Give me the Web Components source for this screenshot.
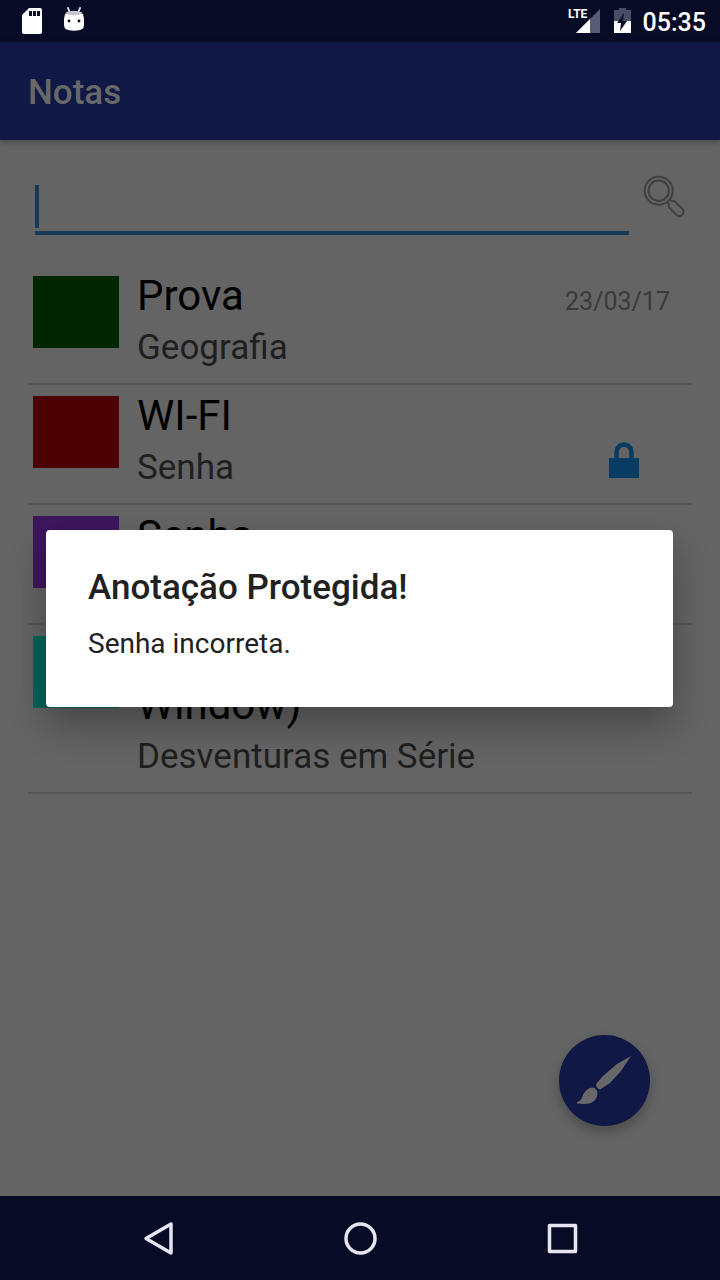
<!DOCTYPE html>
<html lang="pt-BR">
<head>
<meta charset="UTF-8">
<meta name="viewport" content="width=device-width, initial-scale=1">
<title>Notas</title>
<style>
  body {
    margin: 0;
    background: #646464;
    font-family: Roboto, "Liberation Sans", sans-serif;
  }
</style>
</head>
<body>
<notes-screen>
  <status-bar slot="status" time="05:35"></status-bar>
  <app-bar slot="bar">Notas</app-bar>
  <search-box></search-box>
  <note-list>
    <note-item color="#002600" date="23/03/17">Prova<span slot="subject">Geografia</span></note-item>
    <note-item color="#4b0003" locked>WI-FI<span slot="subject">Senha</span></note-item>
    <note-item color="#3d165c">Senha</note-item>
    <note-item color="#046358"><br>Window)<span slot="subject">Desventuras em Série</span></note-item>
  </note-list>
  <new-note-button slot="fab"></new-note-button>
  <alert-dialog slot="dialog" heading="Anotação Protegida!">Senha incorreta.</alert-dialog>
  <nav-bar slot="nav"></nav-bar>
</notes-screen>

<script>
// Base: monta o shadow root a partir do render() de cada componente
class BaseElement extends HTMLElement {
  connectedCallback() {
    if (this.shadowRoot) return;
    this.attachShadow({ mode: 'open' }).innerHTML = this.render();
  }
}

// Estrutura da tela
class NotesScreen extends BaseElement {
  render() {
    return `
      <style>
        :host {
          display: grid;
          grid-template-rows: auto auto 1fr auto;
          position: relative;
          min-height: 100vh;
        }
        main { position: relative; padding: 0 28px; }
        slot[name="fab"]::slotted(*) { position: absolute; right: 70px; bottom: 70px; }
        slot[name="dialog"]::slotted(*) { position: absolute; inset: 42px 0 85px; }
      </style>
      <slot name="status"></slot>
      <slot name="bar"></slot>
      <main><slot></slot><slot name="fab"></slot></main>
      <slot name="nav"></slot>
      <slot name="dialog"></slot>
    `;
  }
}

class StatusBar extends BaseElement {
  render() {
    return `
      <style>
        :host {
          display: flex;
          align-items: center;
          justify-content: space-between;
          height: 42px;
          padding: 0 14px 0 20px;
          background: #070b26;
          color: #fff;
        }
        div { display: flex; align-items: center; }
        .left { gap: 18px; }
        .right { gap: 11px; }
        svg { display: block; }
        time { font-size: 25px; line-height: 30px; font-weight: 500; padding-top: 4px; }
      </style>
      <div class="left">
        <svg width="24" height="42" viewBox="0 0 24 42">
          <path fill="#fff" d="M9 8h11a2 2 0 0 1 2 2v22a2 2 0 0 1-2 2H4a2 2 0 0 1-2-2V15z"/>
          <path fill="#070b26" d="M9 11h3v5H9zM13 11h3v5h-3zM17 11h3v5h-3z"/>
        </svg>
        <svg width="24" height="42" viewBox="0 0 24 42">
          <path stroke="#d9dae3" stroke-width="2" stroke-linecap="round" d="M6 8l2 5M18 8l-2 5"/>
          <path fill="#fff" d="M3 14h18l1 5v4c0 5-1 6-4 7-4 1-8 1-12 0-3-1-4-2-4-7v-4z"/>
          <path fill="#c3c4cf" d="M3 13c5-3 13-3 18 0-4 3-14 3-18 0z"/>
          <circle cx="7" cy="21" r="1.4" fill="#070b26"/><circle cx="17" cy="21" r="1.4" fill="#070b26"/>
        </svg>
      </div>
      <div class="right">
        <svg width="34" height="42" viewBox="0 0 34 42">
          <path fill="#595c72" d="M33 9v24H9z"/>
          <path fill="#fff" d="M23 19v14H9z"/>
          <text x="1" y="18" fill="#fff" font-family="Roboto, sans-serif" font-weight="700" font-size="12">LTE</text>
        </svg>
        <svg width="20" height="42" viewBox="0 0 20 42">
          <path fill="#494c63" d="M2 10h5V8h7v2h5v11H2z"/>
          <path fill="#fff" d="M2 21h17v12H2z"/>
          <path fill="#070b26" d="M12 13L5 23h4l-1 8 7-10h-4z"/>
        </svg>
        <time>${this.getAttribute('time')}</time>
      </div>
    `;
  }
}

class AppBar extends BaseElement {
  render() {
    return `
      <style>
        :host {
          display: block;
          position: relative;
          padding: 30px 28px 26px;
          background: #101845;
          box-shadow: 0 2px 6px rgba(0, 0, 0, .3);
        }
        h1 { margin: 0; font-size: 35px; line-height: 42px; font-weight: 500; color: #686868; }
      </style>
      <h1><slot></slot></h1>
    `;
  }
}

class SearchBox extends BaseElement {
  render() {
    return `
      <style>
        :host { display: flex; gap: 14px; padding: 35px 7px 30px; }
        input {
          flex: 1;
          min-width: 0;
          height: 60px;
          box-sizing: border-box;
          padding: 10px 8px 4px;
          border: 0;
          border-bottom: 4px solid #143a56;
          outline: 0;
          background: linear-gradient(#143a56, #143a56) 0 10px / 4px 43px no-repeat;
          font: 35px/42px Roboto, sans-serif;
          color: #000;
        }
        button { width: 42px; height: 44px; padding: 0; border: 0; background: none; }
        svg { display: block; }
      </style>
      <input type="text" aria-label="Buscar nota">
      <button type="button" aria-label="Buscar">
        <svg width="42" height="44" viewBox="0 0 42 44" fill="none" stroke="#404040" stroke-width="2">
          <circle cx="15.7" cy="15.7" r="14"/><circle cx="15.7" cy="15.7" r="10.2"/>
          <path stroke-linejoin="round" d="M26.800 24.200l1.400 1.600 3.600.4 7.500 7.500c3.400 4-1.600 9.500-5.600 6.300l-7.600-7.600-.4-3.600-1.700-1.700"/>
        </svg>
      </button>
    `;
  }
}

class NoteList extends BaseElement {
  render() {
    return `
      <style>:host { display: block; }</style>
      <slot></slot>
    `;
  }
}

// Item da lista: cor, título, assunto e data ou cadeado
class NoteItem extends BaseElement {
  render() {
    const date = this.getAttribute('date');
    const lock = `
      <svg width="30" height="36" viewBox="0 0 30 36" role="img" aria-label="Protegida">
        <path fill="none" stroke="#073d63" stroke-width="4.500" d="M7.500 17v-7a7.500 7.500 0 0 1 15 0v7"/>
        <path fill="#073d63" d="M0 16h30v20H0z"/>
      </svg>`;
    return `
      <style>
        :host {
          display: grid;
          grid-template-columns: 86px 1fr auto;
          column-gap: 18px;
          padding: 6px 22px 14px 5px;
          border-bottom: 2px solid #565656;
        }
        .swatch { height: 72px; margin-top: 5px; background: ${this.getAttribute('color')}; }
        h2, p { margin: 0; font-weight: 400; }
        h2 { font-size: 42px; line-height: 49px; color: #000; }
        p { min-height: 42px; padding-top: 7px; font-size: 35px; line-height: 42px; color: #1f1f1f; }
        time { padding-top: 16px; font-size: 25px; line-height: 30px; color: #3a3a3a; }
        svg { display: block; align-self: end; margin: 0 31px 11px 0; }
      </style>
      <div class="swatch"></div>
      <div>
        <h2><slot></slot></h2>
        <p><slot name="subject"></slot></p>
      </div>
      ${date ? `<time>${date}</time>` : ''}
      ${this.hasAttribute('locked') ? lock : ''}
    `;
  }
}

class NewNoteButton extends BaseElement {
  render() {
    return `
      <style>
        :host { display: block; }
        button {
          display: block;
          width: 91px;
          height: 91px;
          padding: 0;
          border: 0;
          border-radius: 50%;
          background: #101845;
          box-shadow: 0 6px 12px rgba(0, 0, 0, .25);
        }
        svg { display: block; }
      </style>
      <button type="button" aria-label="Nova nota">
        <svg width="91" height="91" viewBox="0 0 91 91" fill="#686868">
          <path d="M72 21L58 29 44 41l-6.500 7.500c-1 2.500 1 5.500 3.500 6L51 48l11-12z"/>
          <path d="M34 52.500c2 0 4.500 3 4.500 6C37.500 68 30 70 18 68.500v-1.200c4-1.500 5-4.300 6-7.300 2-4 6-7.500 10-7.500z"/>
        </svg>
      </button>
    `;
  }
}

class AlertDialog extends BaseElement {
  render() {
    const heading = this.getAttribute('heading');
    return `
      <style>
        :host { display: grid; align-items: center; padding: 0 47px 0 46px; }
        section {
          padding: 37px 42px 47px;
          background: #fff;
          border-radius: 4px;
          box-shadow: 0 18px 36px rgba(0, 0, 0, .3);
          color: #212121;
        }
        h2 { margin: 0 0 18px; font-size: 35px; line-height: 42px; font-weight: 500; }
        p { margin: 0; font-size: 28px; line-height: 33px; }
      </style>
      <section role="alertdialog" aria-label="${heading}">
        <h2>${heading}</h2>
        <p><slot></slot></p>
      </section>
    `;
  }
}

class NavBar extends BaseElement {
  render() {
    return `
      <style>
        :host { display: block; padding: 0 57px; background: #070b26; }
        nav { display: grid; grid-template-columns: repeat(3, 1fr); }
        button { display: grid; place-items: center; height: 84px; padding: 0; border: 0; background: none; }
        svg { display: block; fill: none; stroke: #e6e6f2; stroke-width: 3.5; stroke-linejoin: round; }
      </style>
      <nav>
        <button type="button" aria-label="Voltar">
          <svg width="36" height="36" viewBox="0 0 36 36"><path d="M31 4v29L6 18.500z"/></svg>
        </button>
        <button type="button" aria-label="Início">
          <svg width="36" height="36" viewBox="0 0 36 36"><circle cx="18.500" cy="18.500" r="14.500"/></svg>
        </button>
        <button type="button" aria-label="Recentes">
          <svg width="36" height="36" viewBox="0 0 36 36"><path d="M5.500 5.500h26v26h-26z"/></svg>
        </button>
      </nav>
    `;
  }
}

customElements.define('notes-screen', NotesScreen);
customElements.define('status-bar', StatusBar);
customElements.define('app-bar', AppBar);
customElements.define('search-box', SearchBox);
customElements.define('note-list', NoteList);
customElements.define('note-item', NoteItem);
customElements.define('new-note-button', NewNoteButton);
customElements.define('alert-dialog', AlertDialog);
customElements.define('nav-bar', NavBar);
</script>
</body>
</html>
